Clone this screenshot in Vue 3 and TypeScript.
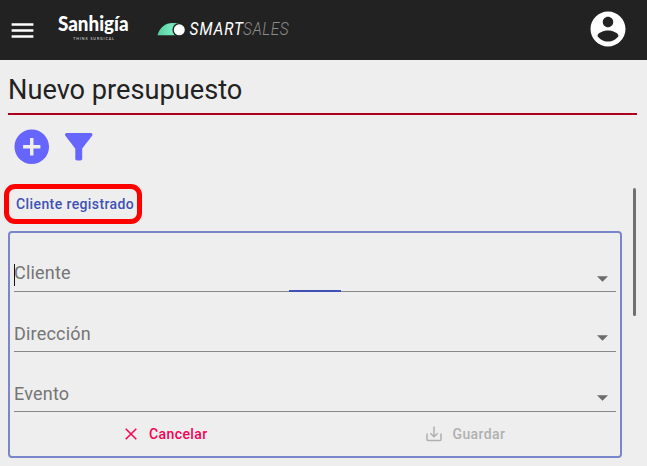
<script setup lang="ts">
import { ref } from 'vue'

interface Field {
  id: string
  label: string
  active: boolean
}

const title = ref('Nuevo presupuesto')
const fields = ref<Field[]>([
  { id: 'cliente', label: 'Cliente', active: true },
  { id: 'direccion', label: 'Dirección', active: false },
  { id: 'evento', label: 'Evento', active: false },
])
</script>

<template>
  <div class="page">
    <header class="bar">
      <svg class="menu" viewBox="0 0 24 24"><path d="M3 18h18v-2H3v2zm0-5h18v-2H3v2zm0-7v2h18V6H3z" /></svg>
      <svg class="brand" viewBox="0 0 76 36">
        <text class="brand-name" x="0" y="22.500" textLength="70.500" lengthAdjust="spacingAndGlyphs">Sanhigía</text>
        <text class="brand-tag" x="15.300" y="32" textLength="40.500">THINK SURGICAL</text>
      </svg>
      <svg class="product" viewBox="0 0 134 22">
        <defs>
          <linearGradient id="fin" x1="0" x2="1" y1="0" y2="0">
            <stop offset="0" stop-color="#50d09c" />
            <stop offset="0.65" stop-color="#7be8c0" />
            <stop offset="1" stop-color="#48bd90" />
          </linearGradient>
        </defs>
        <path d="M.5 17.300C2.500 9.500 8.500 5 15.500 5H22v12.300z" fill="url(#fin)" />
        <circle cx="22.300" cy="11.800" r="6.900" fill="#222" />
        <circle cx="22.300" cy="11.800" r="5.500" fill="#fff" />
        <g transform="scale(0.88 1)">
          <text class="smart" x="37" y="17" textLength="60.500" lengthAdjust="spacing">SMART</text>
          <text class="sales" x="97.700" y="17" textLength="52" lengthAdjust="spacing">SALES</text>
        </g>
      </svg>
      <svg class="avatar" viewBox="0 0 24 24"><path d="M12 2C6.480 2 2 6.480 2 12s4.480 10 10 10 10-4.480 10-10S17.520 2 12 2zm0 3c1.660 0 3 1.340 3 3s-1.340 3-3 3-3-1.340-3-3 1.340-3 3-3zm0 14.200c-2.500 0-4.710-1.280-6-3.220.03-1.990 4-3.080 6-3.080 1.990 0 5.970 1.090 6 3.080-1.290 1.940-3.500 3.220-6 3.220z" /></svg>
    </header>

    <main class="content">
      <h1>{{ title }}</h1>
      <div class="tools">
        <svg viewBox="0 0 24 24"><path d="M12 2C6.480 2 2 6.480 2 12s4.480 10 10 10 10-4.480 10-10S17.520 2 12 2zm5 11h-4v4h-2v-4H7v-2h4V7h2v4h4v2z" /></svg>
        <svg viewBox="0 0 24 24"><path d="M4.250 5.610C6.270 8.200 10 13 10 13v6c0 .55.45 1 1 1h2c.55 0 1-.45 1-1v-6s3.720-4.800 5.740-7.390c.51-.66.04-1.610-.79-1.610H5.040c-.83 0-1.300.95-.79 1.610z" /></svg>
      </div>

      <div class="scroller">
        <div class="column">
          <button class="registered" type="button">Cliente registrado</button>
          <section class="panel">
            <div v-for="f in fields" :key="f.id" class="field" :class="{ active: f.active }">
              <span class="label">{{ f.label }}</span>
              <svg class="caret" viewBox="0 0 12 6"><path d="M0 0h12L6 6z" /></svg>
            </div>
            <div class="actions">
              <button class="cancel" type="button">
                <svg viewBox="0 0 12 12"><path d="M.7.7l10.600 10.600M11.300.7L.7 11.300" /></svg>
                <span>Cancelar</span>
              </button>
              <button class="save" type="button">
                <svg viewBox="0 0 16 16"><path d="M1 7.500V13.500a1 1 0 0 0 1 1h12a1 1 0 0 0 1-1V7.500M8 .5v10M4.300 7.200L8 10.800l3.700-3.600" /></svg>
                <span>Guardar</span>
              </button>
            </div>
          </section>
        </div>
        <div class="thumb"></div>
      </div>
    </main>
  </div>
</template>

<style>
body {
  background: #eee;
  overflow: hidden;
}
</style>

<style scoped>
.page {
  height: 466px;
  background: #eee;
  font-family: Roboto, sans-serif;
  overflow: hidden;
}
.bar {
  box-sizing: border-box;
  height: 60px;
  background: #222;
  display: flex;
  align-items: flex-start;
  padding-left: 7.600px;
}
.menu {
  width: 29px;
  height: 29px;
  margin-top: 15.500px;
  fill: #fff;
}
.brand {
  width: 76px;
  height: 36px;
  margin: 8px 0 0 21.400px;
  overflow: visible;
}
.brand-name {
  font: 900 20.500px Lato, sans-serif;
  fill: #fff;
}
.brand-tag {
  font: 700 3.500px Lato, sans-serif;
  fill: #bbb;
}
.product {
  width: 134px;
  height: 22px;
  margin: 18px 0 0 23px;
}
.smart {
  font: italic 400 17.500px Roboto, sans-serif;
  fill: #fff;
}
.sales {
  font: italic 300 17.500px Roboto, sans-serif;
  fill: #8c8c8c;
}
.avatar {
  width: 42px;
  height: 42px;
  margin: 8.400px 17.600px 0 auto;
  fill: #fff;
}
.content {
  padding: 0 10px 0 8px;
}
h1 {
  box-sizing: border-box;
  height: 55px;
  margin: 0;
  padding-top: 11px;
  border-bottom: 2px solid #ad001f;
  font-size: 27.200px;
  line-height: 39px;
  font-weight: 400;
  color: #222;
}
.tools {
  box-sizing: border-box;
  display: flex;
  gap: 6px;
  padding: 10.500px 0 0 2.700px;
  height: 69px;
}
.tools svg {
  width: 41.500px;
  height: 41.500px;
  fill: #66f;
}
.scroller {
  display: flex;
  justify-content: space-between;
}
.column {
  width: 614px;
}
button {
  font-family: inherit;
  background: none;
  border: 0;
  padding: 0;
  font-weight: 500;
  font-size: 14px;
  letter-spacing: 0.4px;
}
.registered {
  display: block;
  box-sizing: border-box;
  width: 138px;
  height: 40px;
  margin-left: -4px;
  border: 5px solid #f00;
  border-radius: 11px;
  color: #3f51b5;
  white-space: nowrap;
  text-align: left;
  padding-left: 7px;
}
.panel {
  box-sizing: border-box;
  height: 227px;
  margin-top: 7px;
  border: 2px solid #7986cb;
  border-radius: 4px;
  padding: 0 4px;
}
.field {
  box-sizing: border-box;
  position: relative;
  height: 60px;
  border-bottom: 1px solid #888;
  display: flex;
  justify-content: space-between;
  align-items: flex-end;
  padding: 0 8px 6px 0;
}
.field:first-child {
  height: 59px;
  padding-bottom: 7px;
}
.label {
  font-size: 18px;
  line-height: 22px;
  letter-spacing: 0.2px;
  color: #757575;
}
.caret {
  width: 11px;
  height: 6px;
  margin-bottom: 4px;
  fill: #6b6b6b;
}
.active .caret {
  margin-bottom: 2px;
}
.active::before {
  content: '';
  position: absolute;
  left: 0;
  bottom: 5px;
  width: 1px;
  height: 22px;
  background: #111;
}
.active::after {
  content: '';
  position: absolute;
  left: 275px;
  bottom: -1px;
  width: 52px;
  height: 2px;
  background: #3f51b5;
}
.actions {
  display: flex;
  height: 44px;
}
.actions button {
  display: flex;
  align-items: center;
  height: 44px;
}
.cancel {
  color: #f50057;
  width: 302px;
  padding-left: 111px;
  gap: 12px;
}
.save {
  color: #b0b0b0;
  padding-left: 110px;
  gap: 10.500px;
}
.actions svg {
  fill: none;
  stroke: currentColor;
  stroke-width: 1.500;
}
.cancel svg {
  width: 12px;
  height: 12px;
}
.save svg {
  width: 16px;
  height: 16px;
}
.thumb {
  width: 3px;
  height: 128px;
  margin: 4px 1px 0 0;
  border-radius: 2px;
  background: #707070;
}
</style>
